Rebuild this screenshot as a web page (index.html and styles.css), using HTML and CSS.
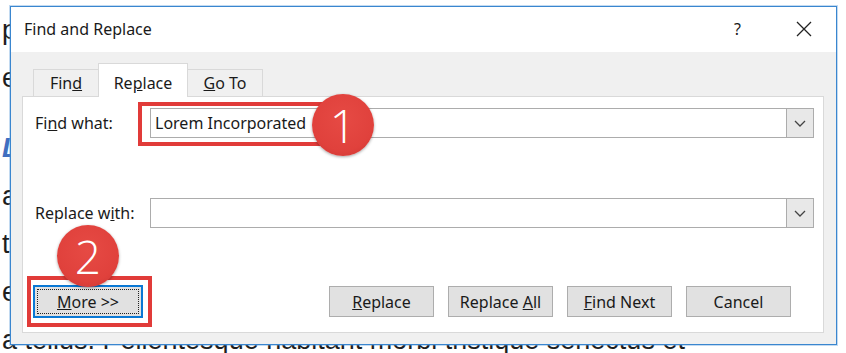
FILE: index.html
```html
<!DOCTYPE html>
<html lang="en">
<head>
  <meta charset="UTF-8">
  <meta name="viewport" content="width=device-width, initial-scale=1.0">
  <title>Find and Replace</title>
  <link rel="stylesheet" href="styles.css">
</head>
<body>
  <div id="document">
    <p>Lorem ipsum dolor sit amet, consectetur adipiscing elit, quisque.</p>
    <p>pellentesque</p>
    <p>egestas</p>
    <p class="heading">Lorem</p>
    <p>aliquam</p>
    <p>tempus</p>
    <p>egestas</p>
    <p>a tellus. Pellentesque habitant morbi tristique senectus et</p>
  </div>

  <div id="dialog">
    <div class="titlebar">
      <span class="title">Find and Replace</span>
      <span class="help">?</span>
      <span class="close">
        <svg width="16" height="16" viewBox="0 0 16 16"><path d="M1 1 L15 15 M15 1 L1 15" stroke="#222" stroke-width="1.3" fill="none"/></svg>
      </span>
    </div>

    <div class="dialog-body">
      <div class="tabs">
        <div class="tab tab-find">Fin<u>d</u></div>
        <div class="tab tab-replace active">Re<u>p</u>lace</div>
        <div class="tab tab-goto"><u>G</u>o To</div>
      </div>

      <div class="panel">
        <div class="field">
          <label>Fi<u>n</u>d what:</label>
          <div class="combo">
            <span class="value">Lorem Incorporated</span>
            <span class="drop"><svg width="12" height="7" viewBox="0 0 12 7"><path d="M1 1 L6 6 L11 1" stroke="#444" stroke-width="1.3" fill="none"/></svg></span>
          </div>
        </div>

        <div class="field field-replace">
          <label>Replace w<u>i</u>th:</label>
          <div class="combo">
            <span class="value"></span>
            <span class="drop"><svg width="12" height="7" viewBox="0 0 12 7"><path d="M1 1 L6 6 L11 1" stroke="#444" stroke-width="1.3" fill="none"/></svg></span>
          </div>
        </div>

        <div class="buttons">
          <button class="btn btn-more"><span><u>M</u>ore &gt;&gt;</span></button>
          <div class="actions">
            <button class="btn"><u>R</u>eplace</button>
            <button class="btn">Replace <u>A</u>ll</button>
            <button class="btn"><u>F</u>ind Next</button>
            <button class="btn">Cancel</button>
          </div>
        </div>
      </div>
    </div>
  </div>

  <div class="callout callout-1"></div>
  <div class="badge badge-1">1</div>
  <div class="callout callout-2"></div>
  <div class="badge badge-2">2</div>
</body>
</html>
```

FILE: styles.css
```css
body { margin: 0; width: 846px; height: 353px; overflow: hidden; background: #fff; position: relative; font-family: "Noto Sans", "Open Sans", sans-serif; }

#document { margin: -42px 0 0 2px; font-family: "Liberation Sans", Arial, sans-serif; font-size: 27px; color: #1e1e1e; white-space: nowrap; }
#document p { margin: 0; line-height: 48px; }
#document .heading { margin-top: 22px; color: #3f6fc0; font-weight: bold; font-style: italic; }

#dialog { position: absolute; left: 10px; top: 6px; width: 825px; height: 337px; border: 1px solid #3a86cf; box-shadow: 0 0 0 1px rgba(80,150,215,0.35); background: #f0f0f0; display: flex; flex-direction: column; color: #1a1a1a; font-size: 16px; }

.titlebar { height: 45px; background: #fff; display: flex; align-items: center; padding: 0 24px 0 13px; }
.title { flex: 1; padding-bottom: 2px; }
.help { font-size: 16px; margin-right: 55px; padding-bottom: 2px; }
.close { display: flex; padding-bottom: 2px; }

.dialog-body { flex: 1; padding: 11px 12px 11px 11px; display: flex; flex-direction: column; }

.tabs { display: flex; align-items: flex-end; padding-left: 11px; height: 34px; margin-bottom: -1px; position: relative; z-index: 1; }
.tab { height: 28px; box-sizing: border-box; border: 1px solid #d9d9d9; border-bottom: none; display: flex; align-items: center; justify-content: center; padding-bottom: 1px; }
.tab-find { width: 65px; border-right: none; }
.tab-replace { width: 90px; }
.tab-goto { width: 75px; border-left: none; }
.tab.active { height: 34px; background: #fff; padding-top: 5px; }

.panel { height: 237px; box-sizing: border-box; background: #fff; border: 1px solid #d9d9d9; padding: 11px 9px 14px 12px; }

.field { display: flex; align-items: center; height: 30px; }
.field-replace { margin-top: 60px; }
.field label { width: 115px; }
.combo { flex: 1; height: 30px; box-sizing: border-box; border: 1px solid #acacac; display: flex; align-items: stretch; }
.combo .value { flex: 1; padding-left: 4px; display: flex; align-items: center; }
.combo .drop { width: 26px; background: #e8e8e8; border: 1px solid #acacac; margin: -1px -1px -1px 0; display: flex; align-items: center; justify-content: center; }

.buttons { display: flex; align-items: center; justify-content: space-between; margin: 57px 23px 0 -2px; height: 33px; }
.actions { display: flex; gap: 14px; }
.btn { width: 105px; height: 31px; background: #e1e1e1; border: 1px solid #adadad; font-family: inherit; font-size: 16px; color: #1a1a1a; padding: 0; }
.btn-more { width: 110px; height: 33px; border: 2px solid #0a78d4; padding: 2px; }
.btn-more span { display: flex; align-items: center; justify-content: center; height: 100%; border: 1px dotted #222; box-sizing: border-box; }

.callout { position: absolute; border: 4px solid #e13b39; box-sizing: border-box; }
.callout-1 { left: 138px; top: 102px; width: 190px; height: 44px; }
.callout-2 { left: 27px; top: 276px; width: 125px; height: 51px; }

.badge { position: absolute; width: 62px; height: 62px; border-radius: 50%; background: radial-gradient(circle at 50% 40%, #e64a44 0%, #e0413c 65%, #c93430 100%); box-shadow: 0 1px 3px rgba(0,0,0,0.35); color: #fff; font-family: "Open Sans", "Noto Sans", sans-serif; font-weight: 300; font-size: 46px; line-height: 62px; text-align: center; }
.badge-1 { left: 312px; top: 94px; }
.badge-2 { left: 57px; top: 225px; }
```
